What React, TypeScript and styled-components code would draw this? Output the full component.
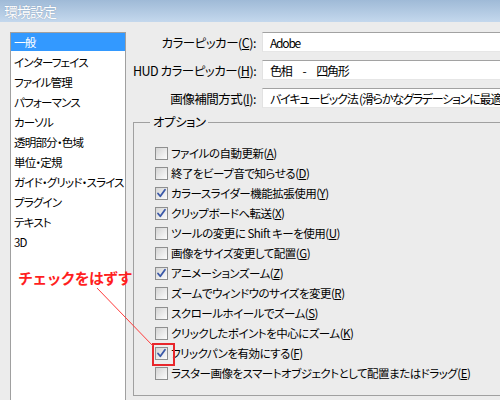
import React from "react";
import styled, { createGlobalStyle } from "styled-components";

const Global = createGlobalStyle`
  html, body { margin: 0; padding: 0; background: #ececec; }
  body { font-family: "Noto Sans CJK JP", "Noto Sans", sans-serif; color: #000; }
  * { box-sizing: border-box; }
`;

const Window = styled.div`
  position: relative;
  width: 500px;
  height: 400px;
  overflow: hidden;
  background: #ececec;
`;

const TitleBar = styled.div`
  height: 22px;
  background: linear-gradient(#9fbad7, #c4d8ed);
  display: flex;
  align-items: center;
  padding-left: 4px;
  color: #fff;
  font-size: 14px;
  letter-spacing: -1px;
  text-shadow: 0 0 1px rgba(80, 100, 130, 0.6);
`;

const Body = styled.div`
  display: flex;
  gap: 7px;
  padding: 10px 0 0 10px;
  font-size: 12px;
  font-feature-settings: "palt";
`;

const List = styled.div`
  width: 116px;
  height: 380px;
  flex: none;
  background: #fff;
  border: 1px solid #a0a0a0;
  display: flex;
  flex-direction: column;
  gap: 2px;
  overflow: hidden;
`;

const ListItem = styled.div<{ $selected?: boolean }>`
  height: 18px;
  display: flex;
  align-items: center;
  padding-left: 3px;
  white-space: nowrap;
  font-size: 11.5px;
  letter-spacing: -0.8px;
  background: ${(p) => (p.$selected ? "#3399ff" : "transparent")};
  color: ${(p) => (p.$selected ? "#fff" : "#000")};
`;

const Right = styled.div`
  flex: none;
  width: 380px;
  display: flex;
  flex-direction: column;
`;

const Fields = styled.div`
  display: grid;
  grid-template-columns: 123px 244px;
  column-gap: 6px;
  row-gap: 8px;
  align-items: center;
`;

const Label = styled.div`
  text-align: right;
  white-space: nowrap;
  font-size: 12.5px;
  letter-spacing: -0.5px;
`;

const Field = styled.div`
  height: 20px;
  background: #fff;
  border-top: 1px solid #a2a2a2;
  border-left: 1px solid #e2e2e2;
  border-bottom: 1px solid #e6e6e6;
  display: flex;
  align-items: center;
  padding-left: 7px;
  white-space: nowrap;
  overflow: hidden;
  font-size: 12px;
  letter-spacing: -1.2px;
`;

const Group = styled.fieldset`
  margin: 6px 0 0 0;
  padding: 13px 0 12px 0;
  border: 1px solid #a0a0a0;
  border-right: none;
  min-width: 0;
`;

const Legend = styled.legend`
  margin-left: 16px;
  padding: 0 3px;
  line-height: 16px;
  font-size: 12.5px;
  letter-spacing: -0.5px;
`;

const Options = styled.div`
  display: flex;
  flex-direction: column;
  padding-left: 21px;
`;

const Row = styled.div`
  height: 20px;
  display: flex;
  align-items: center;
  gap: 3px;
  white-space: nowrap;
  font-size: 11.5px;
  letter-spacing: -0.5px;
`;

const Box = styled.span<{ $marked?: boolean }>`
  position: relative;
  flex: none;
  width: 13px;
  height: 13px;
  border: 1px solid #8e8f8f;
  background: linear-gradient(135deg, #d4d4d4, #f4f4f4 80%, #fff);
  display: flex;
  align-items: center;
  justify-content: center;
  &::after {
    content: "";
    display: ${(p) => (p.$marked ? "block" : "none")};
    position: absolute;
    left: -4px;
    top: -5px;
    width: 19px;
    height: 19px;
    border: 2px solid #e8262b;
  }
`;

const U = styled.span`
  text-decoration: underline;
  text-underline-offset: 1px;
`;

const Note = styled.div`
  position: absolute;
  left: 18px;
  top: 267px;
  color: #ff1f1f;
  font-weight: bold;
  font-size: 15px;
  letter-spacing: -0.8px;
  font-family: "Noto Sans CJK JP", sans-serif;
`;

const Pointer = styled.svg`
  position: absolute;
  left: 0;
  top: 0;
  pointer-events: none;
`;

const Check = () => (
  <svg width="11" height="11" viewBox="0 0 11 11">
    <path d="M2 5.5 L4.3 8.3 L9 1.8" fill="none" stroke="#3a58a8" strokeWidth="1.8" strokeLinejoin="round" strokeLinecap="round" />
  </svg>
);

const key = (label: string, k: string) => (
  <>
    {label}(<U>{k}</U>)
  </>
);

const items = [
  "一般",
  "インターフェイス",
  "ファイル管理",
  "パフォーマンス",
  "カーソル",
  "透明部分・色域",
  "単位・定規",
  "ガイド・グリッド・スライス",
  "プラグイン",
  "テキスト",
  "3D",
];

const options: { t: string; k: string; c: boolean; m?: boolean }[] = [
  { t: "ファイルの自動更新", k: "A", c: false },
  { t: "終了をビープ音で知らせる", k: "D", c: false },
  { t: "カラースライダー機能拡張使用", k: "Y", c: true },
  { t: "クリップボードへ転送", k: "X", c: true },
  { t: "ツールの変更に Shift キーを使用", k: "U", c: false },
  { t: "画像をサイズ変更して配置", k: "G", c: false },
  { t: "アニメーションズーム", k: "Z", c: true },
  { t: "ズームでウィンドウのサイズを変更", k: "R", c: false },
  { t: "スクロールホイールでズーム", k: "S", c: false },
  { t: "クリックしたポイントを中心にズーム", k: "K", c: false },
  { t: "フリックパンを有効にする", k: "F", c: true, m: true },
  { t: "ラスター画像をスマートオブジェクトとして配置またはドラッグ", k: "E", c: false },
];

export default function App() {
  return (
    <>
      <Global />
      <Window>
        <TitleBar>環境設定</TitleBar>
        <Body>
          <List>
            {items.map((it, i) => (
              <ListItem key={it} $selected={i === 0}>
                {it}
              </ListItem>
            ))}
          </List>
          <Right>
            <Fields>
              <Label>{key("カラーピッカー", "C")}:</Label>
              <Field>Adobe</Field>
              <Label>{key("HUD カラーピッカー", "H")}:</Label>
              <Field>色相　-　四角形</Field>
              <Label>{key("画像補間方式", "I")}:</Label>
              <Field>バイキュービック法 (滑らかなグラデーションに最適)</Field>
            </Fields>
            <Group>
              <Legend>オプション</Legend>
              <Options>
                {options.map((o) => (
                  <Row key={o.t}>
                    <Box $marked={o.m}>{o.c && <Check />}</Box>
                    <span>{key(o.t, o.k)}</span>
                  </Row>
                ))}
              </Options>
            </Group>
          </Right>
        </Body>
        <Note>チェックをはずす</Note>
        <Pointer width="500" height="400">
          <line x1="97" y1="288" x2="153" y2="346" stroke="#ff3a3a" strokeWidth="1" />
        </Pointer>
      </Window>
    </>
  );
}
